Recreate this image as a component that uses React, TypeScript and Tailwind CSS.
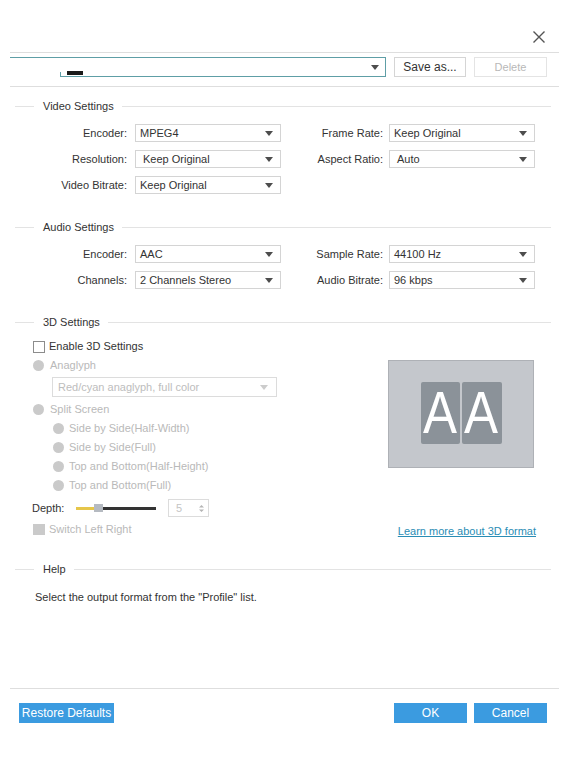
import React from 'react';

function Caret({ disabled }: { disabled?: boolean }) {
  return (
    <svg width="8" height="5" viewBox="0 0 8 5">
      <path d="M0 0h8L4 5z" fill={disabled ? '#cccccc' : '#4d4d4d'} />
    </svg>
  );
}

function Select({ value, pad }: { value: string; pad?: boolean }) {
  return (
    <div
      className={
        'w-[146px] h-[18px] border border-[#d4d4d4] bg-white flex items-center justify-between pr-[7px] ' +
        (pad ? 'pl-[7px]' : 'pl-[4px]')
      }
    >
      <span className="leading-none">{value}</span>
      <Caret />
    </div>
  );
}

function SectionHeader({ title }: { title: string }) {
  return (
    <div className="h-[16px] flex items-center pl-[15px] pr-[17px]">
      <div className="w-[19px] border-t border-[#e3e3e3]" />
      <span className="ml-[9px] mr-[8px] leading-none">{title}</span>
      <div className="flex-1 border-t border-[#e3e3e3]" />
    </div>
  );
}

type Field = { label: string; value: string; pad?: boolean };

function FieldRow({ left, right }: { left: Field; right?: Field }) {
  return (
    <div className="flex items-center h-[18px]">
      <div className="w-[127px] text-right leading-none">{left.label}</div>
      <div className="ml-[8px] w-[145px]">
        <Select value={left.value} pad={left.pad} />
      </div>
      {right && (
        <>
          <div className="w-[103px] text-right leading-none">{right.label}</div>
          <div className="ml-[6px]">
            <Select value={right.value} pad={right.pad} />
          </div>
        </>
      )}
    </div>
  );
}

function Radio({ label, indent }: { label: string; indent?: boolean }) {
  return (
    <div className={'h-[19px] flex items-center text-[#b9b9b9] ' + (indent ? 'ml-[20px]' : '')}>
      <div className="w-[11px] h-[11px] rounded-full bg-[#cacaca]" />
      <span className={'leading-none ' + (indent ? 'ml-[5px]' : 'ml-[6px]')}>{label}</span>
    </div>
  );
}

function BlueButton({ label, w }: { label: string; w: string }) {
  return (
    <div className={w + ' h-[20px] bg-[#3b9be0] text-white flex items-center justify-center leading-none text-[12px]'}>
      {label}
    </div>
  );
}

export default function App() {
  return (
    <div className="w-[568px] h-[760px] bg-white text-[11px] text-[#333] font-['Liberation_Sans',Arial,sans-serif] flex flex-col">
      {/* title bar */}
      <div className="h-[52px] flex justify-end items-end pr-[23px] pb-[9px]">
        <svg width="12" height="12" viewBox="0 0 12 12">
          <path d="M0.5 0.5L11.5 11.5M11.5 0.5L0.5 11.5" stroke="#555" strokeWidth="1.4" />
        </svg>
      </div>
      <div className="ml-[10px] mr-[9px] border-t border-[#dedede]" />

      {/* profile row */}
      <div className="mt-[4px] h-[20px] flex pl-[10px] pr-[21px] gap-[8px]">
        <div className="w-[376px] h-full flex">
          <div className="w-[50px] border-t border-[#5e9ea6]" />
          <div className="relative flex-1 border-t border-b border-r border-[#5e9ea6] flex items-center justify-end pr-[6px]">
            <span className="absolute left-0 bottom-0 w-px h-[4px] bg-[#5e9ea6]" />
            <span className="absolute left-[7px] bottom-[1px] w-[16px] h-[4px] border-y-2 border-[#1a1a1a]" />
            <Caret />
          </div>
        </div>
        <div className="w-[72px] border border-[#d5d5d5] flex items-center justify-center text-[12px] leading-none">
          Save as...
        </div>
        <div className="w-[73px] border border-[#e4e4e4] flex items-center justify-center text-[#b8b8b8] leading-none">
          Delete
        </div>
      </div>
      <div className="mt-[9px] ml-[10px] mr-[9px] border-t border-[#dedede]" />

      {/* video settings */}
      <div className="mt-[11px]">
        <SectionHeader title="Video Settings" />
      </div>
      <div className="mt-[10px] flex flex-col gap-[8px]">
        <FieldRow left={{ label: 'Encoder:', value: 'MPEG4' }} right={{ label: 'Frame Rate:', value: 'Keep Original' }} />
        <FieldRow
          left={{ label: 'Resolution:', value: 'Keep Original', pad: true }}
          right={{ label: 'Aspect Ratio:', value: 'Auto', pad: true }}
        />
        <FieldRow left={{ label: 'Video Bitrate:', value: 'Keep Original' }} />
      </div>

      {/* audio settings */}
      <div className="mt-[25px]">
        <SectionHeader title="Audio Settings" />
      </div>
      <div className="mt-[10px] flex flex-col gap-[8px]">
        <FieldRow left={{ label: 'Encoder:', value: 'AAC' }} right={{ label: 'Sample Rate:', value: '44100 Hz' }} />
        <FieldRow left={{ label: 'Channels:', value: '2 Channels Stereo' }} right={{ label: 'Audio Bitrate:', value: '96 kbps' }} />
      </div>

      {/* 3D settings */}
      <div className="mt-[25px]">
        <SectionHeader title="3D Settings" />
      </div>
      <div className="flex">
        <div className="flex-1 pl-[33px] pt-[7px] flex flex-col">
          <div className="h-[19px] flex items-center">
            <div className="w-[12px] h-[12px] border border-[#8c8c8c] bg-white" />
            <span className="ml-[4px] leading-none">Enable 3D Settings</span>
          </div>
          <Radio label="Anaglyph" />
          <div className="mt-[2px] ml-[19px] w-[225px] h-[20px] border border-[#dcdcdc] flex items-center justify-between pl-[5px] pr-[8px] text-[#bdbdbd]">
            <span className="leading-none">Red/cyan anaglyph, full color</span>
            <Caret disabled />
          </div>
          <div className="mt-[3px]">
            <Radio label="Split Screen" />
          </div>
          <Radio label="Side by Side(Half-Width)" indent />
          <Radio label="Side by Side(Full)" indent />
          <Radio label="Top and Bottom(Half-Height)" indent />
          <Radio label="Top and Bottom(Full)" indent />
          <div className="mt-[4px] h-[18px] flex items-center -ml-[1px]">
            <span className="leading-none w-[32px]">Depth:</span>
            <div className="relative ml-[12px] w-[80px] h-[8px] flex items-center">
              <div className="w-full h-[3px] bg-[#333]">
                <div className="w-[18px] h-full bg-[#e6c64a]" />
              </div>
              <span className="absolute left-[18px] top-0 w-[9px] h-[8px] bg-[#b5bac1]" />
            </div>
            <div className="ml-[12px] w-[41px] h-[18px] border border-[#dcdcdc] flex items-center justify-between pl-[7px] pr-[4px] text-[#c4c4c4]">
              <span className="leading-none">5</span>
              <svg width="5" height="9" viewBox="0 0 5 9">
                <path d="M0 3.5L2.5 1L5 3.5zM0 5.5L2.5 8L5 5.5z" fill="#b5b5b5" />
              </svg>
            </div>
          </div>
          <div className="mt-[3px] h-[19px] flex items-center text-[#b9b9b9]">
            <div className="w-[12px] h-[11px] bg-[#cacaca]" />
            <span className="ml-[4px] leading-none">Switch Left Right</span>
          </div>
        </div>
        <div className="w-[148px] mr-[32px] flex flex-col">
          <div className="mt-[30px] w-[146px] h-[108px] bg-[#c4c7cc] border border-[#aeb1b6] flex items-center justify-center pb-[2px]">
            <div className="flex gap-[2px]">
              <div className="w-[39px] h-[62px] rounded-[2px] bg-[#8b9299] flex items-center justify-center">
                <span className="text-white text-[60px] leading-[62px] scale-x-[0.85]">A</span>
              </div>
              <div className="w-[40px] h-[62px] rounded-[2px] bg-[#8b9299] flex items-center justify-center">
                <span className="text-white text-[60px] leading-[62px] scale-x-[0.85]">A</span>
              </div>
            </div>
          </div>
          <div className="mt-[55px] self-end h-[16px] flex items-center text-[#2a8db5] underline leading-none">
            Learn more about 3D format
          </div>
        </div>
      </div>

      {/* help */}
      <div className="mt-[22px]">
        <SectionHeader title="Help" />
      </div>
      <div className="mt-[12px] h-[16px] flex items-center pl-[35px] leading-none">
        Select the output format from the "Profile" list.
      </div>

      <div className="mt-[83px] ml-[10px] mr-[9px] border-t border-[#dedede]" />
      <div className="mt-[14px] flex justify-between pl-[19px] pr-[21px]">
        <BlueButton label="Restore Defaults" w="w-[95px]" />
        <div className="flex gap-[7px]">
          <BlueButton label="OK" w="w-[73px]" />
          <BlueButton label="Cancel" w="w-[73px]" />
        </div>
      </div>
    </div>
  );
}
